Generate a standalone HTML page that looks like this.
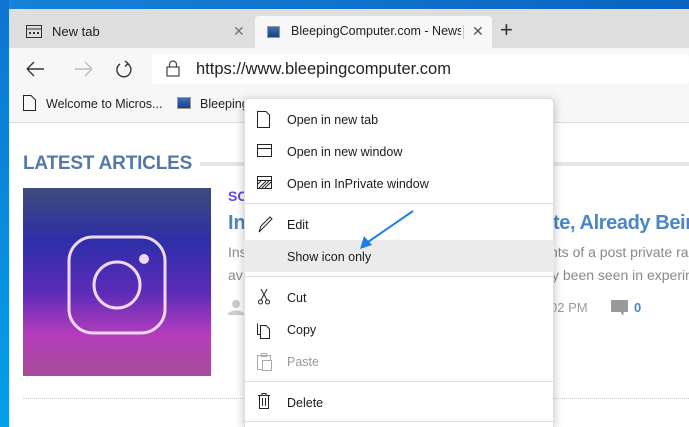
<!DOCTYPE html>
<html><head><meta charset="utf-8"><style>
*{margin:0;padding:0;box-sizing:border-box}
html,body{width:689px;height:427px;overflow:hidden}
body{position:relative;background:#fff;font-family:"Liberation Sans",sans-serif}
.a{position:absolute}
.m{font-size:12.5px;color:#1a1a1a;left:287px}
.pg{font-size:13px;color:#888}
</style></head><body>
<div class="a" style="left:0;top:0;width:689px;height:9px;background:linear-gradient(90deg,#1682d8,#0a63c0)"></div>
<div class="a" style="left:0;top:0;width:9px;height:427px;background:linear-gradient(#0e74d0,#05a0e8)"></div>
<div class="a" style="left:9px;top:9px;width:680px;height:39px;background:#dedede"></div>
<svg class="a" style="left:26px;top:25px" width="16" height="13"><rect x="0.5" y="0.5" width="15" height="12" fill="none" stroke="#333"/><line x1="0" y1="4" x2="16" y2="4" stroke="#333"/><rect x="3" y="7" width="2" height="2" fill="#333"/><rect x="7" y="7" width="2" height="2" fill="#333"/><rect x="11" y="7" width="2" height="2" fill="#333"/></svg>
<div class="a" style="left:52px;top:24px;font-size:13px;color:#222">New tab</div>
<div class="a" style="left:233px;top:23px;font-size:14px;color:#777">✕</div>
<div class="a" style="left:255px;top:16px;width:237px;height:32px;background:#f7f7f7;border-radius:4px 4px 0 0"></div>
<div class="a" style="left:267px;top:26px;width:13px;height:12px;background:linear-gradient(#3a6fb8,#1d3f80);border:1px solid #999"></div>
<div class="a" style="left:291px;top:24px;font-size:12.5px;color:#222;white-space:nowrap;width:170px;overflow:hidden">BleepingComputer.com - News,</div>
<div class="a" style="left:463px;top:25px;width:1px;height:14px;background:#ccc"></div>
<div class="a" style="left:472px;top:23px;font-size:14px;color:#555">✕</div>
<div class="a" style="left:500px;top:17px;font-size:22px;color:#333;font-weight:300">+</div>
<div class="a" style="left:9px;top:48px;width:680px;height:75px;background:#f7f7f7;border-bottom:1px solid #dcdcdc"></div>
<svg class="a" style="left:25px;top:60px" width="140" height="20" fill="none" stroke-width="1.4"><path d="M2 9H19M2 9L9 2M2 9L9 16" stroke="#333"/><path d="M50 9H67M67 9L60 2M67 9L60 16" stroke="#bbb"/><path d="M95 4A7 7 0 1 0 102 3.5" stroke="#333"/><path d="M100 1L103 3.5L100 6.5" stroke="#333"/></svg>
<div class="a" style="left:152px;top:54px;width:537px;height:30px;background:#fff;border-radius:4px"></div>
<svg class="a" style="left:166px;top:60px" width="14" height="17" fill="none" stroke="#444" stroke-width="1.2"><rect x="1" y="7" width="12" height="9"/><path d="M3.5 7V4.5A3.5 3.5 0 0 1 10.5 4.5V7"/></svg>
<div class="a" style="left:196px;top:60px;font-size:16.5px;color:#222">https://www.bleepingcomputer.com</div>
<svg class="a" style="left:23px;top:95px" width="13" height="16" fill="none" stroke="#222"><path d="M0.5 0.5H8L12.5 5V15.5H0.5Z"/></svg>
<div class="a" style="left:46px;top:97px;font-size:12.5px;color:#222">Welcome to Micros...</div>
<div class="a" style="left:177px;top:97px;width:14px;height:12px;background:linear-gradient(#3a6fb8,#1d3f80);border:1px solid #999"></div>
<div class="a" style="left:200px;top:97px;font-size:12.5px;color:#222">Bleeping</div>
<div class="a" style="left:23px;top:153px;font-size:19px;font-weight:bold;color:#5577aa;letter-spacing:-0.2px">LATEST ARTICLES</div>
<div class="a" style="left:200px;top:162px;width:489px;height:4px;background:#e6e6e6"></div>
<div class="a" style="left:23px;top:188px;width:188px;height:188px;background:linear-gradient(#3d4c7a 0%,#2e2ea8 28%,#5a2cb8 55%,#b43cbc 78%,#a84c98 100%)"></div>
<svg class="a" style="left:23px;top:188px" width="188" height="188" fill="none" stroke="#f0d8f4" stroke-width="3"><rect x="46" y="49" width="96" height="96" rx="24"/><circle cx="94" cy="97" r="23"/><circle cx="121" cy="71" r="5" fill="#f0d8f4" stroke="none"/></svg>
<div class="a" style="left:228px;top:188px;font-size:14px;font-weight:bold;color:#6644dd">SC</div>
<div class="a" style="left:228px;top:212px;font-size:20px;font-weight:bold;color:#4a86c8">In</div>
<div class="a" style="left:553px;top:212px;font-size:20px;font-weight:bold;color:#4a86c8;white-space:nowrap;letter-spacing:-0.4px">te, Already Being</div>
<div class="a pg" style="left:228px;top:244px;font-size:14px">Ins</div>
<div class="a pg" style="left:550px;top:244px;font-size:14px;white-space:nowrap">nts of a post private ra</div>
<div class="a pg" style="left:228px;top:267px;font-size:14px">av</div>
<div class="a pg" style="left:552px;top:267px;font-size:14px;white-space:nowrap">y been seen in experim</div>
<svg class="a" style="left:228px;top:299px" width="16" height="16" fill="#ccc"><circle cx="8" cy="5" r="4"/><path d="M0 16C0 10 16 10 16 16Z"/></svg>
<div class="a pg" style="left:550px;top:300px;font-size:13px;color:#999">02 PM</div>
<svg class="a" style="left:611px;top:300px" width="18" height="17" fill="#999"><rect x="0" y="0" width="17" height="12" rx="1"/><path d="M9 11L13 11L12 16Z"/></svg>
<div class="a" style="left:634px;top:300px;font-size:13px;font-weight:bold;color:#4a86c8">0</div>
<div class="a" style="left:23px;top:398px;width:666px;border-top:1px dotted #ccc"></div>
<div class="a" style="left:244px;top:98px;width:310px;height:329px;background:#fff;border:1px solid #ddd;border-bottom:none;border-radius:4px 4px 0 0;box-shadow:0 2px 10px rgba(0,0,0,0.25)"></div>
<svg class="a" style="left:244px;top:98px" width="310" height="329" fill="none" stroke="#222" stroke-width="1">
<path d="M13.5 13.5H22L25.5 17V29.5H13.5Z"/>
<rect x="13.5" y="46.5" width="14" height="12"/><line x1="13" y1="50.5" x2="28" y2="50.5"/>
<rect x="13.5" y="78.5" width="14" height="12"/><line x1="13" y1="82.5" x2="28" y2="82.5"/><path d="M15 90L22 83M18 90L25 83M21 90L27 84M14 86L17 83" />
<line x1="0" y1="105.5" x2="310" y2="105.5" stroke="#ddd"/>
<path d="M15 134L17 128L26 119L28 121L19 130Z"/>
<rect x="0" y="142" width="310" height="32" fill="#ebebeb" stroke="none"/>
<line x1="0" y1="178.5" x2="310" y2="178.5" stroke="#ddd"/>
<path d="M17 191L23 202M23 191L17 202"/><circle cx="16.5" cy="204" r="2"/><circle cx="23.5" cy="204" r="2"/>
<path d="M13.5 225.5V236.5H16.5M16.5 227.5H22L25.5 231V240.5H16.5Z"/>
<g stroke="#aaa"><path d="M13.5 257.5H26.5V271.5H13.5Z"/><rect x="17.5" y="255.5" width="5" height="3"/><rect x="18.5" y="262.5" width="9" height="10" fill="#fff"/></g>
<line x1="0" y1="283.5" x2="310" y2="283.5" stroke="#ddd"/>
<path d="M14 297.5H26M18 297.5V295.5H22V297.5M15.5 297.5V310.5H24.5V297.5M18.5 300V308M21.5 300V308"/>
<line x1="0" y1="323.5" x2="310" y2="323.5" stroke="#ddd"/>
</svg>
<div class="a m" style="top:113px">Open in new tab</div>
<div class="a m" style="top:145px">Open in new window</div>
<div class="a m" style="top:177px">Open in InPrivate window</div>
<div class="a m" style="top:218px">Edit</div>
<div class="a m" style="top:250px">Show icon only</div>
<div class="a m" style="top:291px">Cut</div>
<div class="a m" style="top:323px">Copy</div>
<div class="a m" style="top:355px;color:#999">Paste</div>
<div class="a m" style="top:396px">Delete</div>
<svg class="a" style="left:350px;top:205px" width="70" height="50"><line x1="63" y1="6" x2="18" y2="37" stroke="#1e80e6" stroke-width="2"/><path d="M10 44L14 31L22 40Z" fill="#1e80e6"/></svg>
</body></html>
